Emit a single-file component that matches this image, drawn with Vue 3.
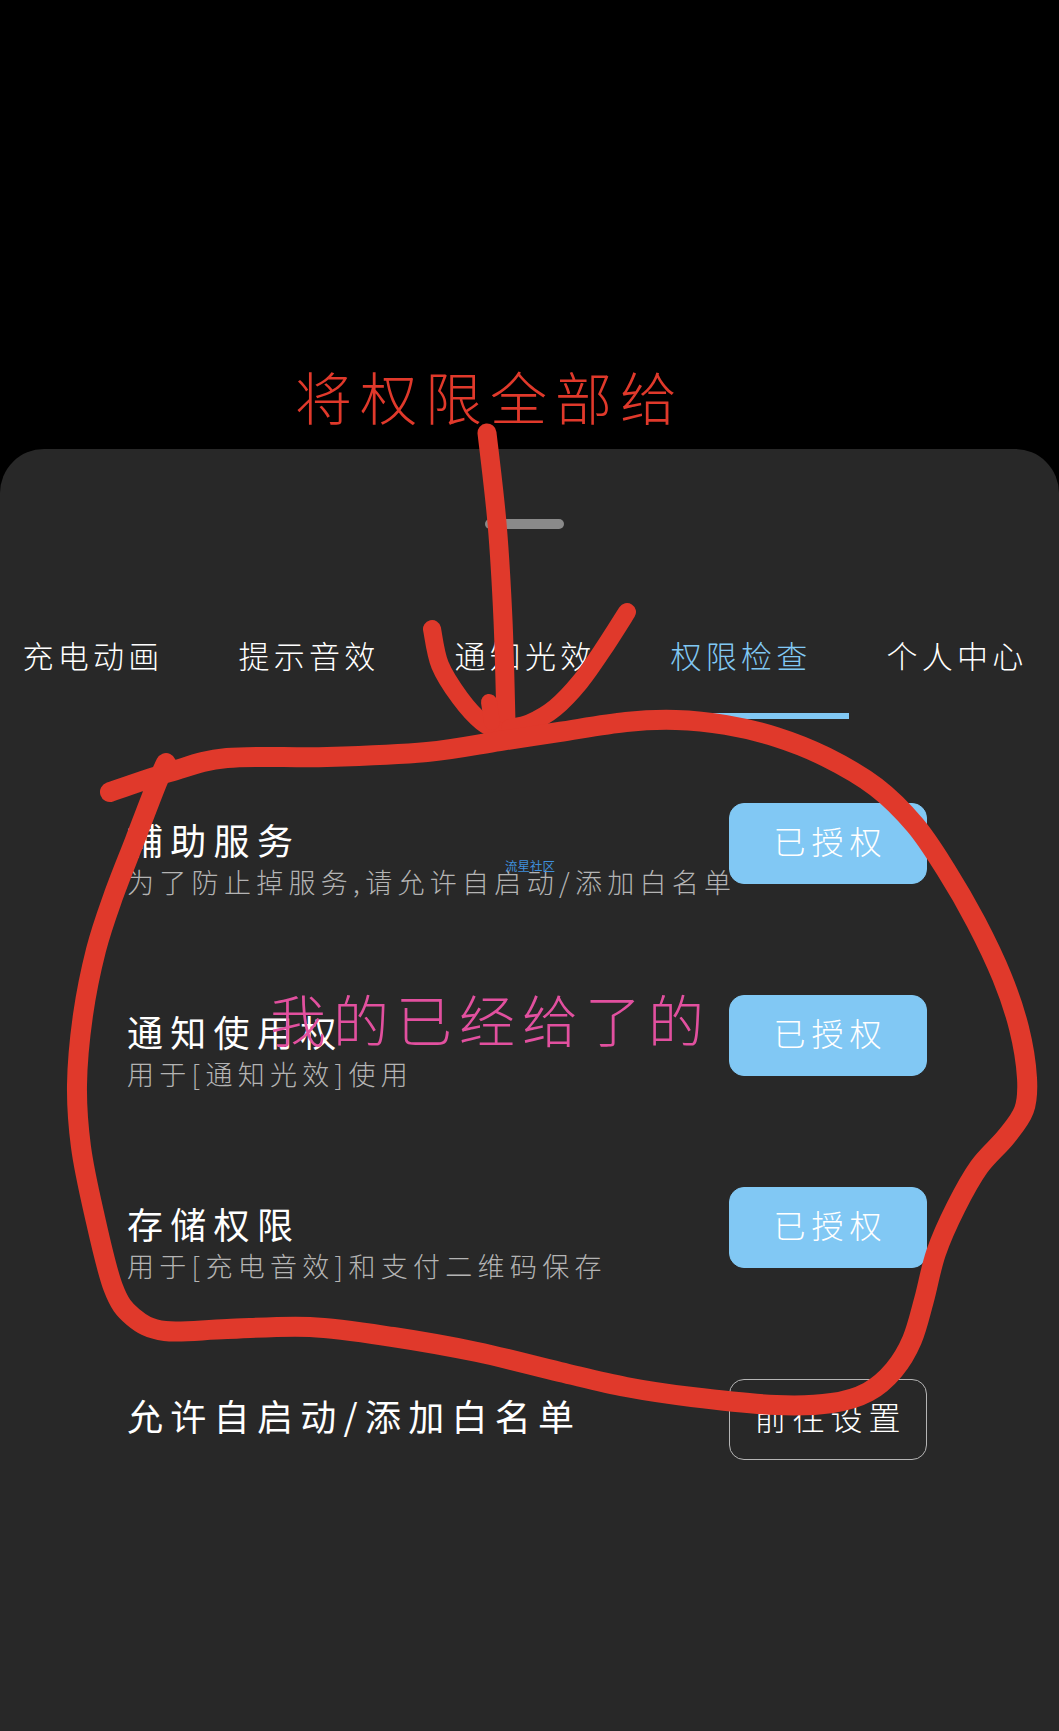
<script setup>
const tabs = ['充电动画', '提示音效', '通知光效', '权限检查', '个人中心']
const rows = [
  { title: '辅助服务', sub: '为了防止掉服务,请允许自启动/添加白名单', btn: '已授权', on: true },
  { title: '通知使用权', sub: '用于[通知光效]使用', btn: '已授权', on: true },
  { title: '存储权限', sub: '用于[充电音效]和支付二维码保存', btn: '已授权', on: true },
  { title: '允许自启动/添加白名单', sub: '', btn: '前往设置', on: false }
]

// Hand-drawn strokes: points are sampled along each stroke, then smoothed.
function smooth(p) {
  let d = `M${p[0][0]} ${p[0][1]}`
  for (let i = 0; i < p.length - 1; i++) {
    const a = p[Math.max(i - 1, 0)], b = p[i], c = p[i + 1], e = p[Math.min(i + 2, p.length - 1)]
    const c1x = b[0] + (c[0] - a[0]) / 6, c1y = b[1] + (c[1] - a[1]) / 6
    const c2x = c[0] - (e[0] - b[0]) / 6, c2y = c[1] - (e[1] - b[1]) / 6
    d += ` C${c1x.toFixed(1)} ${c1y.toFixed(1)} ${c2x.toFixed(1)} ${c2y.toFixed(1)} ${c[0]} ${c[1]}`
  }
  return d
}
const strokes = [
  { w: 19, d: smooth([[487, 433], [497, 523], [503, 620], [506, 722]]) },
  { w: 18, d: smooth([[432, 629], [440, 665], [460, 698], [482, 722], [503, 733]]) },
  { w: 18, d: smooth([[627, 612], [604, 648], [580, 682], [555, 708], [530, 723], [510, 728]]) },
  { w: 16, d: smooth([[489, 702], [492, 722]]) },
  { w: 20, d: smooth([
    [110, 792], [170, 772], [227, 758], [327, 757], [427, 752], [500, 741], [559, 732], [626, 722],
    [676, 720], [726, 725], [776, 737], [826, 757], [876, 787], [915, 825], [946, 870], [976, 922],
    [1002, 977], [1019, 1028], [1027, 1078], [1024, 1110], [1006, 1137], [979, 1167], [956, 1207],
    [936, 1253], [924, 1300], [912, 1340], [894, 1370], [868, 1392], [832, 1403], [776, 1405], [692, 1397],
    [626, 1387], [560, 1372], [477, 1352], [393, 1337], [310, 1327], [227, 1329], [165, 1331], [133, 1317],
    [113, 1287], [94, 1213], [81, 1147], [77, 1085], [83, 1015], [96, 950], [113, 897], [135, 840],
    [157, 783], [166, 763]
  ]) }
]
</script>

<template>
  <div class="page">
    <div class="sheet">
      <div class="handle"></div>
      <div class="tabs">
        <div v-for="(t, i) in tabs" :key="t" class="tab" :class="{ active: i === 3 }">{{ t }}</div>
      </div>
      <div class="rows">
        <div v-for="r in rows" :key="r.title" class="row">
          <div class="text">
            <div class="title">{{ r.title }}</div>
            <div v-if="r.sub" class="sub">{{ r.sub }}</div>
          </div>
          <div class="btn" :class="{ on: r.on }">{{ r.btn }}</div>
        </div>
      </div>
    </div>

    <svg class="ink" width="1059" height="1731" viewBox="0 0 1059 1731" fill="none">
      <path v-for="(s, i) in strokes" :key="i" :d="s.d" stroke="#e0392b" :stroke-width="s.w"
        stroke-linecap="round" stroke-linejoin="round" />
    </svg>
    <div class="note red">将权限全部给</div>
    <div class="note pink">我的已经给了的</div>
    <div class="mark">流星社区</div>
  </div>
</template>

<style scoped>
.page {
  position: relative;
  height: 1731px;
  box-sizing: border-box;
  padding-top: 449px;
  background: #000;
  overflow: hidden;
  font-family: "Noto Sans CJK SC", "Noto Sans", sans-serif;
  font-weight: 300;
  color: #fff;
}
.sheet {
  height: 1282px;
  background: #282828;
  border-radius: 44px 44px 0 0;
  overflow: hidden;
}
.handle {
  width: 79px;
  height: 10px;
  margin: 70px 0 0 485px;
  border-radius: 5px;
  background: #8a8a8a;
}
.tabs {
  display: flex;
  margin: 101px 0 0 -15px;
  width: 1080px;
}
.tab {
  flex: none;
  width: 216px;
  box-sizing: border-box;
  padding-bottom: 33px;
  border-bottom: 6px solid transparent;
  text-align: center;
  font-size: 31px;
  line-height: 50px;
  letter-spacing: 4.2px;
}
.tab.active {
  color: #81c8f4;
  border-bottom-color: #81c8f4;
}
.rows {
  display: flex;
  flex-direction: column;
  gap: 111px;
  margin-top: 84px;
  padding: 0 132px 0 127px;
}
.row {
  display: flex;
  justify-content: space-between;
  align-items: flex-start;
  height: 81px;
}
.text {
  padding-top: 12px;
  white-space: nowrap;
  width: 0;
}
.title {
  font-size: 36px;
  font-weight: 400;
  line-height: 49px;
  letter-spacing: 7.3px;
}
.sub {
  font-size: 27px;
  line-height: 36px;
  letter-spacing: 5.3px;
  color: #b4b4b4;
}
.btn {
  box-sizing: border-box;
  width: 198px;
  height: 81px;
  padding: 0 0 7px 5px;
  border: 1px solid #b5b5b5;
  border-radius: 15px;
  display: flex;
  align-items: center;
  justify-content: center;
  font-size: 32px;
  letter-spacing: 6px;
}
.btn.on {
  background: #81c8f4;
  border-color: #81c8f4;
}
.ink {
  position: absolute;
  left: 0;
  top: 0;
  pointer-events: none;
}
.note {
  position: absolute;
  white-space: nowrap;
  line-height: 70px;
  font-size: 56px;
  letter-spacing: 7px;
}
.note.red {
  left: 295px;
  top: 360px;
  font-size: 57px;
  letter-spacing: 8px;
  color: #e0392b;
}
.note.pink {
  left: 270px;
  top: 983px;
  color: #e2509f;
}
.mark {
  position: absolute;
  left: 505px;
  top: 858px;
  font-size: 12.5px;
  line-height: 16px;
  color: #3f8fdc;
  font-weight: 400;
}
</style>
